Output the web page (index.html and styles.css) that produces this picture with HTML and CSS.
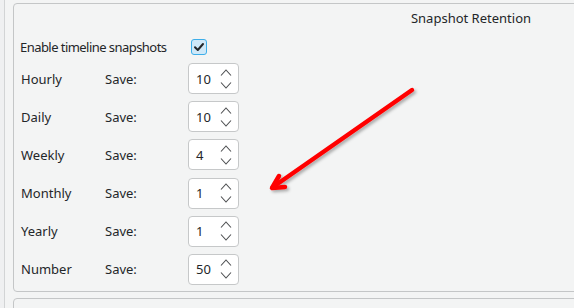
FILE: index.html
```html
<!DOCTYPE html>
<html lang="en">
<head>
  <meta charset="UTF-8">
  <title>Snapshot Retention</title>
  <link rel="stylesheet" href="styles.css">
</head>
<body>
  <div id="window">
    <div class="edge"></div>
    <div id="content">
      <div class="group">
        <div class="group-title">Snapshot Retention</div>
        <div class="enable-row">
          <span class="enable-label">Enable timeline snapshots</span>
          <span class="checkbox">
            <svg width="12" height="12" viewBox="0 0 12 12"><path d="M2 6.2 L4.8 9 L10 3" fill="none" stroke="#232629" stroke-width="2" stroke-linecap="round" stroke-linejoin="round"/></svg>
          </span>
        </div>
        <div class="rows">
          <div class="label">Hourly</div><div class="label">Save:</div>
          <div class="spin"><span>10</span><span class="arrows"><svg width="12" height="20" viewBox="0 0 12 20"><path d="M1 6.5 L6 1 L11 6.5 M1 13.5 L6 19 L11 13.5" fill="none" stroke="#4d4f51" stroke-width="1.1"/></svg></span></div>
          <div class="label">Daily</div><div class="label">Save:</div>
          <div class="spin"><span>10</span><span class="arrows"><svg width="12" height="20" viewBox="0 0 12 20"><path d="M1 6.5 L6 1 L11 6.5 M1 13.5 L6 19 L11 13.5" fill="none" stroke="#4d4f51" stroke-width="1.1"/></svg></span></div>
          <div class="label">Weekly</div><div class="label">Save:</div>
          <div class="spin"><span>4</span><span class="arrows"><svg width="12" height="20" viewBox="0 0 12 20"><path d="M1 6.5 L6 1 L11 6.5 M1 13.5 L6 19 L11 13.5" fill="none" stroke="#4d4f51" stroke-width="1.1"/></svg></span></div>
          <div class="label">Monthly</div><div class="label">Save:</div>
          <div class="spin"><span>1</span><span class="arrows"><svg width="12" height="20" viewBox="0 0 12 20"><path d="M1 6.5 L6 1 L11 6.5 M1 13.5 L6 19 L11 13.5" fill="none" stroke="#4d4f51" stroke-width="1.1"/></svg></span></div>
          <div class="label">Yearly</div><div class="label">Save:</div>
          <div class="spin"><span>1</span><span class="arrows"><svg width="12" height="20" viewBox="0 0 12 20"><path d="M1 6.5 L6 1 L11 6.5 M1 13.5 L6 19 L11 13.5" fill="none" stroke="#4d4f51" stroke-width="1.1"/></svg></span></div>
          <div class="label">Number</div><div class="label">Save:</div>
          <div class="spin"><span>50</span><span class="arrows"><svg width="12" height="20" viewBox="0 0 12 20"><path d="M1 6.5 L6 1 L11 6.5 M1 13.5 L6 19 L11 13.5" fill="none" stroke="#4d4f51" stroke-width="1.1"/></svg></span></div>
        </div>
      </div>
      <div class="group next"></div>
    </div>

    <!-- red annotation arrow drawn over the dialog -->
    <svg class="annotation" width="574" height="308" viewBox="0 0 574 308">
      <defs>
        <filter id="shadow" x="-10%" y="-10%" width="130%" height="130%">
          <feDropShadow dx="2" dy="2" stdDeviation="1.5" flood-color="#000" flood-opacity="0.3"/>
        </filter>
      </defs>
      <g filter="url(#shadow)" fill="none" stroke="#ff0000" stroke-width="4.5" stroke-linecap="round" stroke-linejoin="round">
        <path d="M412 90 L273 187"/>
        <path d="M279 176 L272 188 L285 187"/>
      </g>
    </svg>
  </div>
</body>
</html>
```

FILE: styles.css
```css
body {
  margin: 0;
  font-family: "Noto Sans", sans-serif;
  font-size: 13px;
  color: #232629;
  background-color: #f3f4f4;
  overflow: hidden;
}
#window {
  position: relative;
  display: flex;
  width: 574px;
  height: 308px;
  overflow: hidden;
}
.edge {
  width: 4px;
  border-right: 1px solid #d2d4d5;
  background-color: #eff0f1;
  flex-shrink: 0;
}
#content {
  padding-left: 8px;
  padding-top: 3px;
}
.group {
  width: 916px;
  height: 289px;
  border: 1px solid #c4c6c7;
  border-radius: 4px;
  box-sizing: border-box;
}
.group.next {
  margin-top: 6px;
  height: 40px;
}
.group-title {
  text-align: center;
  padding-top: 5px;
  height: 22.5px;
}
.enable-row {
  display: flex;
  align-items: center;
  padding-left: 6px;
  height: 31px;
}
.enable-label {
  letter-spacing: -0.55px;
}
.checkbox {
  display: flex;
  align-items: center;
  justify-content: center;
  width: 14px;
  height: 14px;
  margin-left: 25px;
  border: 1px solid #3daee9;
  border-radius: 3px;
  background-color: #cfe8f8;
}
.rows {
  display: grid;
  grid-template-columns: 84px 83px 51px;
  grid-auto-rows: 31px;
  row-gap: 7.2px;
  align-items: center;
  margin-top: 0.5px;
  padding-left: 7px;
}
.spin {
  display: flex;
  align-items: center;
  justify-content: space-between;
  height: 31px;
  box-sizing: border-box;
  padding: 0 6px 0 7px;
  background-color: #ffffff;
  border: 1px solid #c6c8c9;
  border-radius: 4px;
}
.arrows {
  display: flex;
}
.annotation {
  position: absolute;
  top: 0;
  left: 0;
}
```
